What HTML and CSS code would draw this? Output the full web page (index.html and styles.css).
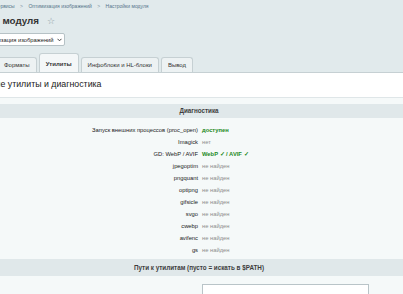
FILE: index.html
```html
<!DOCTYPE html>
<html lang="ru">
<head>
    <meta charset="UTF-8">
    <meta name="viewport" content="width=device-width, initial-scale=1.0">
    <title>Настройки модуля</title>
    <link rel="stylesheet" href="styles.css">
</head>
<body>
    <div class="page">
        <div class="breadcrumbs">
            <span>Сервисы</span>
            <span class="sep">&gt;</span>
            <span>Оптимизация изображений</span>
            <span class="sep">&gt;</span>
            <span>Настройки модуля</span>
        </div>

        <h1 class="title">Настройки модуля <span class="star">&#9734;</span></h1>

        <div class="module-select">
            <span>Оптимизация изображений</span>
            <svg class="chevron" width="5" height="4" viewBox="0 0 5 4"><path d="M0.5 0.8 L2.5 2.8 L4.5 0.8" fill="none" stroke="#333" stroke-width="0.9"/></svg>
        </div>

        <div class="tabs">
            <div class="tab first">Форматы</div>
            <div class="tab active">Утилиты</div>
            <div class="tab">Инфоблоки и HL-блоки</div>
            <div class="tab">Вывод</div>
        </div>

        <div class="panel">
            <div class="panel-title">Внешние утилиты и диагностика</div>
            <div class="panel-body">
                <div class="heading">Диагностика</div>
                <table class="diag">
                    <tr><td class="label">Запуск внешних процессов (proc_open)</td><td class="ok">доступен</td></tr>
                    <tr><td class="label">Imagick</td><td class="no">нет</td></tr>
                    <tr><td class="label">GD: WebP / AVIF</td><td class="ok">WebP ✓ / AVIF ✓</td></tr>
                    <tr><td class="label">jpegoptim</td><td class="no">не найден</td></tr>
                    <tr><td class="label">pngquant</td><td class="no">не найден</td></tr>
                    <tr><td class="label">optipng</td><td class="no">не найден</td></tr>
                    <tr><td class="label">gifsicle</td><td class="no">не найден</td></tr>
                    <tr><td class="label">svgo</td><td class="no">не найден</td></tr>
                    <tr><td class="label">cwebp</td><td class="no">не найден</td></tr>
                    <tr><td class="label">avifenc</td><td class="no">не найден</td></tr>
                    <tr><td class="label">gs</td><td class="no">не найден</td></tr>
                </table>
                <div class="heading second">Пути к утилитам (пусто = искать в $PATH)</div>
                <div class="path-row">
                    <div class="path-label"></div>
                    <input type="text" class="path-input">
                </div>
            </div>
        </div>
    </div>
</body>
</html>
```

FILE: styles.css
```css
body {
  margin: 0;
  background-color: #e1eaec;
  font-family: "Liberation Sans", Arial, sans-serif;
  color: #000;
  overflow: hidden;
}

.page {
  width: 408px;
  margin-left: -5px;
}

/* Breadcrumbs */
.breadcrumbs {
  margin-left: -1px;
  padding-top: 3px;
  height: 7px;
  font-size: 5px;
  line-height: 7px;
  color: #56758a;
  white-space: nowrap;
}

.breadcrumbs .sep {
  margin: 0 4px;
  color: #7a909c;
}

/* Title */
.title {
  margin: 4px 0 0 -47px;
  height: 14px;
  font-size: 9.8px;
  line-height: 14px;
  font-weight: bold;
  color: #333;
  white-space: nowrap;
}

.title .star {
  margin-left: 5px;
  font-weight: normal;
  font-size: 9px;
  color: #8a9aa2;
}

/* Module select */
.module-select {
  display: flex;
  align-items: center;
  gap: 3px;
  width: max-content;
  margin: 5px 0 0 -20px;
  height: 11px;
  padding: 0 2px 0 4px;
  background-color: #fff;
  border: 1px solid #b6c2c6;
  border-radius: 2px;
  font-size: 5.8px;
  color: #222;
  white-space: nowrap;
}

/* Tabs */
.tabs {
  display: flex;
  align-items: flex-end;
  gap: 2px;
  margin-top: 7px;
  height: 19px;
}

.tab {
  height: 15px;
  padding: 0 6px;
  box-sizing: border-box;
  line-height: 14px;
  font-size: 6px;
  color: #333;
  background-color: #edf2f3;
  border: 1px solid #c6d0d3;
  border-bottom: none;
  border-radius: 3px 3px 0 0;
  white-space: nowrap;
}

.tab.first {
  margin-left: 2px;
}

.tab.active {
  height: 19px;
  line-height: 21px;
  font-weight: bold;
  background-color: #f4f7f8;
}

/* Panel */
.panel {
  background-color: #f5f9f9;
  border-top: 1px solid #c6d0d3;
}

.panel-title {
  height: 24px;
  line-height: 23px;
  font-size: 8.8px;
  color: #222;
  text-indent: -27px;
  background-color: #fff;
  border-bottom: 1px solid #dfe6e8;
  white-space: nowrap;
  overflow: hidden;
}

.panel-body {
  padding-top: 6px;
}

.heading {
  height: 14px;
  line-height: 14px;
  text-align: center;
  font-size: 6.3px;
  font-weight: bold;
  color: #3d3d3d;
  background-color: #e0e8ea;
}

.heading.second {
  margin-top: 3px;
  height: 17px;
  line-height: 17px;
}

.diag {
  width: 100%;
  border-collapse: collapse;
  margin-top: 6px;
}

.diag td {
  width: 50%;
  height: 12px;
  padding: 0;
  line-height: 12px;
  font-size: 5.8px;
  white-space: nowrap;
}

.diag td.label {
  text-align: right;
  padding-right: 1px;
  color: #222;
}

.diag td.ok,
.diag td.no {
  padding-left: 3px;
}

.diag td.ok {
  color: #1d8a1d;
  font-weight: bold;
}

.diag td.no {
  color: #8c8c8c;
}

.path-row {
  display: flex;
  padding-top: 8px;
}

.path-label {
  width: 50%;
}

.path-input {
  width: 165px;
  height: 20px;
  margin: 0 0 0 3px;
  padding: 0;
  border: 1px solid #b9c4c8;
  background-color: #fff;
}
```
